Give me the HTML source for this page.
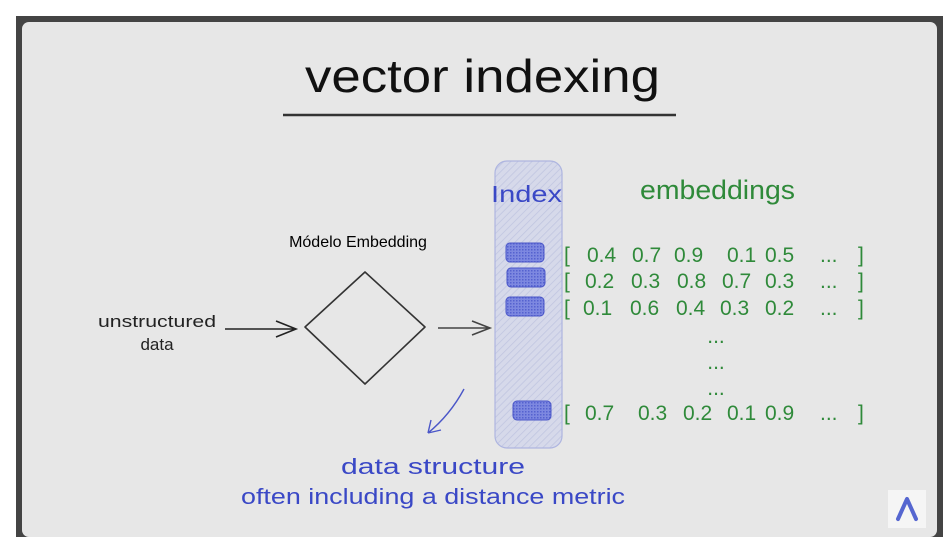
<!DOCTYPE html>
<html><head><meta charset="utf-8"><style>
html,body{margin:0;padding:0;background:#fff;}
body{width:952px;height:547px;overflow:hidden;position:relative;font-family:"Liberation Sans",sans-serif;}
</style></head><body>
<svg width="952" height="547" viewBox="0 0 952 547" xmlns="http://www.w3.org/2000/svg" style="position:absolute;left:0;top:0">
<defs>
<pattern id="h" width="5" height="5" patternUnits="userSpaceOnUse" patternTransform="rotate(45)">
<rect width="5" height="5" fill="#d6d9ea"/><line x1="0" y1="0" x2="0" y2="5" stroke="#bfc4e0" stroke-width="1.5"/></pattern>
<pattern id="x" width="3" height="3" patternUnits="userSpaceOnUse">
<rect width="3" height="3" fill="#7d88e0"/><rect width="1.5" height="1.5" fill="#5562cf"/></pattern>
</defs>
<rect x="16" y="16" width="927" height="521" fill="#444"/>
<rect x="22" y="22" width="915" height="515" rx="7" fill="#e7e7e7"/>
<text x="305" y="92" font-size="46" fill="#111" textLength="355" lengthAdjust="spacingAndGlyphs">vector indexing</text>
<line x1="283" y1="115" x2="676" y2="115" stroke="#333" stroke-width="2.5"/>
<text x="358" y="247" text-anchor="middle" font-size="16" fill="#000">Módelo Embedding</text>
<text x="98" y="327" font-size="17" fill="#222" textLength="118" lengthAdjust="spacingAndGlyphs">unstructured</text>
<text x="157" y="350" text-anchor="middle" font-size="17" fill="#222">data</text>
<path d="M225 329 L296 329 M276 321 L296 329 L276 337" stroke="#222" stroke-width="1.6" fill="none"/>
<path d="M365 272 L425 327 L365 384 L305 327 Z" stroke="#333" stroke-width="1.6" fill="none" stroke-linejoin="round"/>
<path d="M438 328 L490 328 M472 321 L490 328 L472 335" stroke="#444" stroke-width="1.6" fill="none"/>
<rect x="495" y="161" width="67" height="287" rx="12" fill="url(#h)" stroke="#aeb5e0" stroke-width="1.2"/>
<text x="491" y="202" font-size="23" fill="#3a48c6" textLength="71" lengthAdjust="spacingAndGlyphs">Index</text>
<rect x="506" y="243" width="38" height="19" rx="4" fill="url(#x)" stroke="#4a56c8"/>
<rect x="507" y="268" width="38" height="19" rx="4" fill="url(#x)" stroke="#4a56c8"/>
<rect x="506" y="297" width="38" height="19" rx="4" fill="url(#x)" stroke="#4a56c8"/>
<rect x="513" y="401" width="38" height="19" rx="4" fill="url(#x)" stroke="#4a56c8"/>
<text x="640" y="199" font-size="27" fill="#2f8a3a" textLength="155" lengthAdjust="spacingAndGlyphs">embeddings</text>
<g font-size="21" fill="#2f8a3a">
<g transform="translate(0,262)"><text x="564">[</text><text x="587">0.4</text><text x="632">0.7</text><text x="674">0.9</text><text x="727">0.1</text><text x="765">0.5</text><text x="820">...</text><text x="858">]</text></g>
<g transform="translate(0,288)"><text x="564">[</text><text x="585">0.2</text><text x="631">0.3</text><text x="677">0.8</text><text x="722">0.7</text><text x="765">0.3</text><text x="820">...</text><text x="858">]</text></g>
<g transform="translate(0,315)"><text x="564">[</text><text x="583">0.1</text><text x="630">0.6</text><text x="676">0.4</text><text x="720">0.3</text><text x="765">0.2</text><text x="820">...</text><text x="858">]</text></g>
<text x="716" y="343" text-anchor="middle">...</text>
<text x="716" y="369" text-anchor="middle">...</text>
<text x="716" y="395" text-anchor="middle">...</text>
<g transform="translate(0,420)"><text x="564">[</text><text x="585">0.7</text><text x="638">0.3</text><text x="683">0.2</text><text x="727">0.1</text><text x="765">0.9</text><text x="820">...</text><text x="858">]</text></g>
</g>
<path d="M464 389 Q450 415 428 433 M428 433 L431 420 M428 433 L441 430" stroke="#4a56c8" stroke-width="1.4" fill="none"/>
<text x="341" y="474" font-size="22" fill="#3a48c6" textLength="184" lengthAdjust="spacingAndGlyphs">data structure</text>
<text x="241" y="504" font-size="22" fill="#3a48c6" textLength="384" lengthAdjust="spacingAndGlyphs">often including a distance metric</text>
<rect x="888" y="490" width="38" height="38" fill="#f5f5f5"/>
<path d="M898 519 L907 499 L916 519" stroke="#5566d0" stroke-width="4" fill="none" stroke-linecap="round" stroke-linejoin="round"/>
</svg>
</body></html>
